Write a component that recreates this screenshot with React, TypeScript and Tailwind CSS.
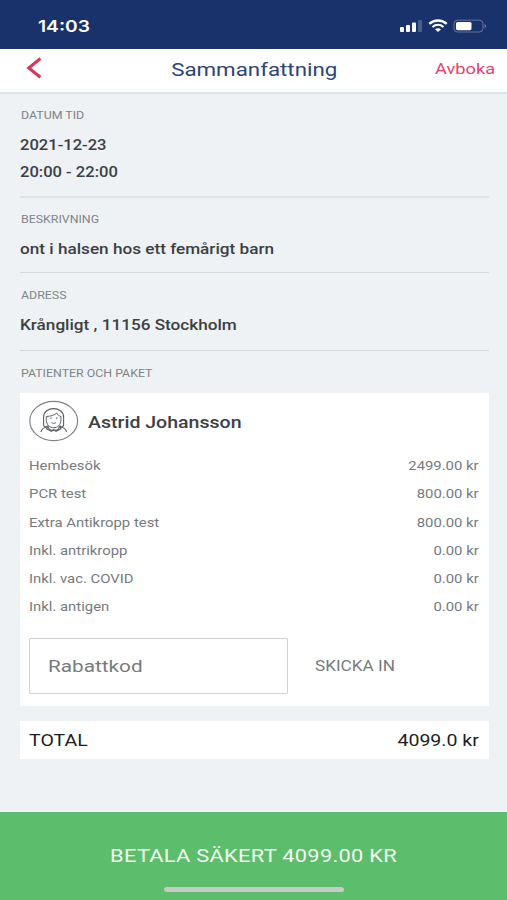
import type { ReactNode } from "react";
import { clsx } from "clsx";

const lineItems = [
  { label: "Hembesök", price: "2499.00 kr" },
  { label: "PCR test", price: "800.00 kr" },
  { label: "Extra Antikropp test", price: "800.00 kr" },
  { label: "Inkl. antrikropp", price: "0.00 kr" },
  { label: "Inkl. vac. COVID", price: "0.00 kr" },
  { label: "Inkl. antigen", price: "0.00 kr" },
];

// Extended-width text, stretched from the side it is aligned to
const Wide = ({ children, className = "origin-left" }: { children: ReactNode; className?: string }) => (
  <span className={clsx("inline-block scale-x-[1.2] whitespace-nowrap", className)}>{children}</span>
);

const StatusBar = () => (
  <div className="flex h-[49px] items-center justify-between bg-[#1a326c] pt-[3px] pr-[20px] pl-[38px] text-white">
    <span className="font-['Inter'] text-[16px] leading-none font-semibold">
      <Wide>14:03</Wide>
    </span>
    <svg width="88" height="16" viewBox="0 0 88 16" fill="none">
      <rect x="1" y="9" width="4" height="5" rx="1" fill="#fff" />
      <rect x="7" y="7" width="4" height="7" rx="1" fill="#fff" />
      <rect x="13" y="4.5" width="4" height="9.5" rx="1" fill="#fff" />
      <rect x="19" y="2" width="4" height="12" rx="1" fill="#fff" fillOpacity="0.22" />
      <path d="M30.3 5.8C35.4 1.4 42.6 1.4 47.7 5.8" stroke="#fff" strokeWidth="2.3" />
      <path d="M33.5 9C36.8 6.2 41.2 6.2 44.5 9" stroke="#fff" strokeWidth="2.1" />
      <path d="M36 11.3C37.8 9.9 40.2 9.9 42 11.3L39 14Z" fill="#fff" />
      <rect x="55" y="2.2" width="29" height="11.8" rx="3.5" stroke="#fff" strokeOpacity="0.32" />
      <rect x="57" y="4" width="15.5" height="8.2" rx="1.6" fill="#fff" />
      <path d="M85.7 6V10.2C87.3 9.5 87.3 6.7 85.7 6Z" fill="#fff" fillOpacity="0.45" />
    </svg>
  </div>
);

const Header = () => (
  <header className="grid h-[45px] grid-cols-[1fr_auto_1fr] items-center border-b-2 border-[#e0e4e7] bg-white px-[12px] pb-px">
    <button className="pb-[4px] pl-[14px]" aria-label="Tillbaka">
      <svg width="16" height="22" viewBox="0 0 16 22" fill="none" stroke="#d63a5a" strokeWidth="3.1">
        <path d="M14.4 1.5L2.8 11L14.4 20.2" />
      </svg>
    </button>
    <h1 className="pl-px text-[18.6px] leading-none text-[#2c437b]">
      <Wide className="origin-center">Sammanfattning</Wide>
    </h1>
    <button className="text-right text-[15.2px] leading-none text-[#e6416f]">
      <Wide className="origin-right">Avboka</Wide>
    </button>
  </header>
);

const Label = ({ children }: { children: ReactNode }) => (
  <h2 className="pl-[0.5px] text-[10.3px] leading-[14px] text-[#808487]">
    <Wide>{children}</Wide>
  </h2>
);

const Avatar = () => (
  <svg width="50" height="42" viewBox="0 0 50 42" fill="none" stroke="#5c5f62">
    <ellipse cx="24.7" cy="21" rx="23.9" ry="19.6" stroke="#808386" strokeWidth="1.2" />
    <path d="M14.6 24.5V17C14.6 5.8 34.6 5.8 34.6 17V24.5C34.6 26.5 33 27.2 31 27.2M14.6 24.5C14.6 26.5 16 27.2 18 27.2" strokeWidth="1.1" />
    <path d="M17.3 16.5C21.5 16.3 25.5 15.2 27.7 13C28.5 14.8 30 16 32 16.5V19.5C32 30.5 17.3 30.5 17.3 19.5Z" strokeWidth="1" />
    <path d="M21.3 18.2H22.6M27 18.2H28.3" strokeWidth="1.3" />
    <path d="M22.4 22.4C23.8 23.7 25.8 23.7 27.2 22.4" strokeWidth="0.9" />
    <path d="M12 32C12.4 28.6 15.5 27.2 19 26.5L20 28.8C22.5 31 27 31 29.5 28.8L30.5 26.5C34 27.2 37 28.6 37.5 32" strokeWidth="1.1" />
    <path d="M18.5 25.5L17.7 29L22.5 31.2L24.7 29.5L27 31.2L31.7 29L31 25.5" strokeWidth="1.3" />
  </svg>
);

export default function App() {
  return (
    <div className="flex h-[900px] w-[507px] flex-col overflow-hidden bg-[#eef2f5] font-['Roboto',sans-serif]">
      <StatusBar />
      <Header />

      <main className="flex flex-1 flex-col pr-[18px] pl-[20px] text-[#3d4043]">
        <section className="h-[104px] border-b-2 border-[#e0e4e7] pt-[15px]">
          <Label>DATUM TID</Label>
          <p className="mt-[9px] text-[13.8px] leading-[26.5px] font-medium">
            <Wide>2021-12-23</Wide>
            <br />
            <Wide>20:00 - 22:00</Wide>
          </p>
        </section>
        <section className="h-[75px] border-b border-[#d5d9dd] pt-[15px]">
          <Label>BESKRIVNING</Label>
          <p className="mt-[9px] text-[14.3px] leading-[26px] font-medium">
            <Wide>ont i halsen hos ett femårigt barn</Wide>
          </p>
        </section>
        <section className="h-[78px] border-b border-[#d5d9dd] pt-[16px]">
          <Label>ADRESS</Label>
          <p className="mt-[9px] text-[14.3px] leading-[26px] font-medium">
            <Wide>Krångligt , 11156 Stockholm</Wide>
          </p>
        </section>

        <div className="pt-[16px]">
          <Label>PATIENTER OCH PAKET</Label>
        </div>
        <section className="mt-[12px] h-[313px] bg-white px-[9px] pt-[7px]">
          <div className="flex items-center gap-[9px]">
            <Avatar />
            <h3 className="pt-[4px] text-[16.3px] leading-none font-medium">
              <Wide>Astrid Johansson</Wide>
            </h3>
          </div>
          <ul className="mt-[10px] pr-px text-[12.4px] text-[#777b7e]">
            {lineItems.map((item) => (
              <li key={item.label} className="flex h-[28.15px] items-center justify-between pt-px">
                <Wide>{item.label}</Wide>
                <Wide className="origin-right">{item.price}</Wide>
              </li>
            ))}
          </ul>
          <div className="mt-[17px] flex items-center">
            <div className="flex h-[56px] w-[259px] items-center rounded-[1px] border border-[#d0d3d6] pt-[2px] pl-[17.5px] text-[17.3px] text-[#777b7e]">
              <Wide>Rabattkod</Wide>
            </div>
            <button className="pt-[2px] pl-[27px] text-[14.3px] text-[#777b7e]">
              <Wide>SKICKA IN</Wide>
            </button>
          </div>
        </section>

        <section className="mt-[15px] flex h-[38px] items-center justify-between bg-white pt-[2px] pr-[10px] pl-[9px] text-[16.3px] text-[#1c1e20]">
          <Wide>TOTAL</Wide>
          <Wide className="origin-right">4099.0 kr</Wide>
        </section>
      </main>

      <footer className="flex h-[88px] flex-col items-center bg-[#5cbd6c]">
        <button className="mt-[34px] text-[18.2px] leading-[20px] tracking-[0.24px] text-[#f1fbf0]">
          <Wide className="origin-center">BETALA SÄKERT 4099.00 KR</Wide>
        </button>
        <div className="mt-[21px] h-[5px] w-[180px] rounded-full bg-[#c9c9c5]" />
      </footer>
    </div>
  );
}
